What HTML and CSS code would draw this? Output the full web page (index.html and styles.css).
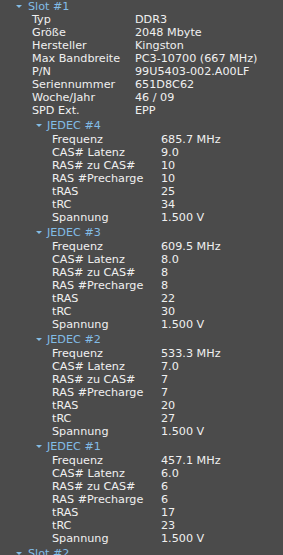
FILE: index.html
```html
<!DOCTYPE html>
<html lang="de">
<head>
  <meta charset="UTF-8" />
  <meta name="viewport" content="width=device-width, initial-scale=1.0" />
  <title>SPD - Slot #1</title>
  <link rel="stylesheet" href="styles.css">
</head>
<body>
  <div class="tree">
    <div class="node slot">
      <div class="head"><span class="arrow"></span>Slot #1</div>
      <div class="rows">
        <div class="row"><span class="key">Typ</span><span>DDR3</span></div>
        <div class="row"><span class="key">Größe</span><span>2048 Mbyte</span></div>
        <div class="row"><span class="key">Hersteller</span><span>Kingston</span></div>
        <div class="row"><span class="key">Max Bandbreite</span><span>PC3-10700 (667 MHz)</span></div>
        <div class="row"><span class="key">P/N</span><span>99U5403-002.A00LF</span></div>
        <div class="row"><span class="key">Seriennummer</span><span>651D8C62</span></div>
        <div class="row"><span class="key">Woche/Jahr</span><span>46 / 09</span></div>
        <div class="row"><span class="key">SPD Ext.</span><span>EPP</span></div>
      </div>

      <div class="node jedec">
        <div class="head"><span class="arrow"></span>JEDEC #4</div>
        <div class="rows">
          <div class="row"><span class="key">Frequenz</span><span>685.7 MHz</span></div>
          <div class="row"><span class="key">CAS# Latenz</span><span>9.0</span></div>
          <div class="row"><span class="key">RAS# zu CAS#</span><span>10</span></div>
          <div class="row"><span class="key">RAS #Precharge</span><span>10</span></div>
          <div class="row"><span class="key">tRAS</span><span>25</span></div>
          <div class="row"><span class="key">tRC</span><span>34</span></div>
          <div class="row"><span class="key">Spannung</span><span>1.500 V</span></div>
        </div>
      </div>

      <div class="node jedec">
        <div class="head"><span class="arrow"></span>JEDEC #3</div>
        <div class="rows">
          <div class="row"><span class="key">Frequenz</span><span>609.5 MHz</span></div>
          <div class="row"><span class="key">CAS# Latenz</span><span>8.0</span></div>
          <div class="row"><span class="key">RAS# zu CAS#</span><span>8</span></div>
          <div class="row"><span class="key">RAS #Precharge</span><span>8</span></div>
          <div class="row"><span class="key">tRAS</span><span>22</span></div>
          <div class="row"><span class="key">tRC</span><span>30</span></div>
          <div class="row"><span class="key">Spannung</span><span>1.500 V</span></div>
        </div>
      </div>

      <div class="node jedec">
        <div class="head"><span class="arrow"></span>JEDEC #2</div>
        <div class="rows">
          <div class="row"><span class="key">Frequenz</span><span>533.3 MHz</span></div>
          <div class="row"><span class="key">CAS# Latenz</span><span>7.0</span></div>
          <div class="row"><span class="key">RAS# zu CAS#</span><span>7</span></div>
          <div class="row"><span class="key">RAS #Precharge</span><span>7</span></div>
          <div class="row"><span class="key">tRAS</span><span>20</span></div>
          <div class="row"><span class="key">tRC</span><span>27</span></div>
          <div class="row"><span class="key">Spannung</span><span>1.500 V</span></div>
        </div>
      </div>

      <div class="node jedec">
        <div class="head"><span class="arrow"></span>JEDEC #1</div>
        <div class="rows">
          <div class="row"><span class="key">Frequenz</span><span>457.1 MHz</span></div>
          <div class="row"><span class="key">CAS# Latenz</span><span>6.0</span></div>
          <div class="row"><span class="key">RAS# zu CAS#</span><span>6</span></div>
          <div class="row"><span class="key">RAS #Precharge</span><span>6</span></div>
          <div class="row"><span class="key">tRAS</span><span>17</span></div>
          <div class="row"><span class="key">tRC</span><span>23</span></div>
          <div class="row"><span class="key">Spannung</span><span>1.500 V</span></div>
        </div>
      </div>
    </div>

    <div class="node slot">
      <div class="head"><span class="arrow"></span>Slot #2</div>
    </div>
  </div>
</body>
</html>
```

FILE: styles.css
```css
html, body {
  margin: 0;
  background-color: #4b4b4b;
  overflow: hidden;
}

body {
  font-family: 'DejaVu Sans', Verdana, sans-serif;
  font-size: 11.2px;
  line-height: 13px;
  color: #f0f0f0;
}

.head {
  display: flex;
  align-items: center;
  color: #82bce6;
  height: 13px;
  white-space: nowrap;
}

.arrow {
  flex: none;
  width: 0;
  height: 0;
  border-left: 3px solid transparent;
  border-right: 3px solid transparent;
  border-top: 3px solid #82bce6;
  margin-right: 6px;
}

.slot > .head {
  padding-left: 16px;
}

.slot > .rows {
  padding-left: 32px;
}

.slot > .rows .key {
  width: 103px;
}

.jedec > .head {
  padding-left: 36px;
  padding-top: 3px;
  padding-bottom: 2px;
  height: 11px;
  box-sizing: content-box;
}

.jedec > .head .arrow {
  margin-right: 5px;
}

.jedec > .rows {
  padding-left: 52px;
}

.jedec .key {
  width: 109px;
}

.row {
  display: flex;
  height: 13px;
  white-space: nowrap;
}

.key {
  flex: none;
}

.slot + .slot > .head {
  padding-top: 2px;
}
```
